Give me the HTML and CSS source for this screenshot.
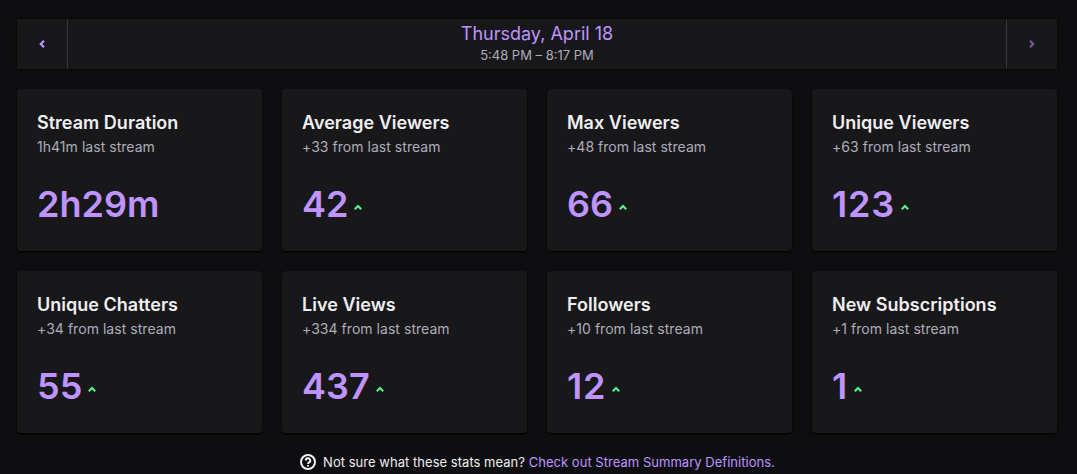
FILE: index.html
```
<!DOCTYPE html>
<html lang="en">
<head>
    <meta charset="UTF-8">
    <meta name="viewport" content="width=device-width, initial-scale=1.0">
    <title>Stream Summary</title>
    <link rel="stylesheet" href="styles.css">
</head>
<body>
    <header class="date-bar">
        <button class="nav-button prev" aria-label="Previous stream">
            <svg width="6" height="8" viewBox="0 0 6 8"><path d="M5 .8 1.800 4 5 7.200"/></svg>
        </button>
        <div class="date-info">
            <div class="date">Thursday, April 18</div>
            <div class="time">5:48 PM – 8:17 PM</div>
        </div>
        <button class="nav-button next" aria-label="Next stream" disabled>
            <svg width="6" height="8" viewBox="0 0 6 8"><path d="M1 .8 4.200 4 1 7.200"/></svg>
        </button>
    </header>

    <main class="stats">
        <div class="card">
            <h2>Stream Duration</h2>
            <p>1h41m last stream</p>
            <div class="value">2h29m</div>
        </div>
        <div class="card">
            <h2>Average Viewers</h2>
            <p>+33 from last stream</p>
            <div class="value">42<svg class="up" width="8" height="6" viewBox="0 0 8 6"><path d="m.8 5.200L4 2l3.200 3.200"/></svg></div>
        </div>
        <div class="card">
            <h2>Max Viewers</h2>
            <p>+48 from last stream</p>
            <div class="value">66<svg class="up" width="8" height="6" viewBox="0 0 8 6"><path d="m.8 5.200L4 2l3.200 3.200"/></svg></div>
        </div>
        <div class="card">
            <h2>Unique Viewers</h2>
            <p>+63 from last stream</p>
            <div class="value spaced">123<svg class="up" width="8" height="6" viewBox="0 0 8 6"><path d="m.8 5.200L4 2l3.200 3.200"/></svg></div>
        </div>
        <div class="card">
            <h2>Unique Chatters</h2>
            <p>+34 from last stream</p>
            <div class="value">55<svg class="up" width="8" height="6" viewBox="0 0 8 6"><path d="m.8 5.200L4 2l3.200 3.200"/></svg></div>
        </div>
        <div class="card">
            <h2>Live Views</h2>
            <p>+334 from last stream</p>
            <div class="value">437<svg class="up" width="8" height="6" viewBox="0 0 8 6"><path d="m.8 5.200L4 2l3.200 3.200"/></svg></div>
        </div>
        <div class="card">
            <h2>Followers</h2>
            <p>+10 from last stream</p>
            <div class="value spaced">12<svg class="up" width="8" height="6" viewBox="0 0 8 6"><path d="m.8 5.200L4 2l3.200 3.200"/></svg></div>
        </div>
        <div class="card">
            <h2>New Subscriptions</h2>
            <p>+1 from last stream</p>
            <div class="value spaced">1<svg class="up" width="8" height="6" viewBox="0 0 8 6"><path d="m.8 5.200L4 2l3.200 3.200"/></svg></div>
        </div>
    </main>

    <footer class="help">
        <svg class="help-icon" width="16" height="16" viewBox="0 0 16 16">
            <circle cx="8" cy="8" r="7"/>
            <path d="M5.800 6.500a2.200 2.200 0 1 1 3.300 1.900C8.300 8.800 8 9.100 8 10M8 11v1.600"/>
        </svg>
        <span>Not sure what these stats mean? <a href="#">Check out Stream Summary Definitions.</a></span>
    </footer>
</body>
</html>
```

FILE: styles.css
```
:root {
    --bg: #0e0e10;
    --card: #18181b;
    --text: #efeff1;
    --muted: #adadb8;
    --purple: #bf94ff;
    --green: #57ee8c;
}

* {
    margin: 0;
    padding: 0;
    box-sizing: border-box;
}

body {
    height: 474px;
    padding: 19px 20px 0 17px;
    overflow: hidden;
    background: var(--bg);
    color: var(--text);
    font-family: Inter, sans-serif;
}

svg {
    fill: none;
    stroke: currentColor;
    stroke-width: 2;
}

.date-bar {
    display: flex;
    height: 50px;
    background: var(--card);
    box-shadow: 0 0 2px #000;
}

.nav-button {
    display: flex;
    align-items: center;
    justify-content: center;
    width: 51px;
    border: none;
    background: none;
    color: var(--purple);
}

.nav-button svg {
    stroke-width: 2.2;
}

.prev {
    border-right: 1px solid #35353a;
}

.next {
    border-left: 1px solid #35353a;
}

.next svg {
    opacity: 0.55;
}

.date-info {
    flex: 1;
    padding-top: 3px;
    text-align: center;
}

.date {
    color: var(--purple);
    font-size: 18px;
    line-height: 24px;
}

.time {
    color: var(--muted);
    font-size: 13px;
    line-height: 18px;
}

.stats {
    display: grid;
    grid-template-columns: repeat(4, 1fr);
    gap: 20px;
    margin-top: 20px;
}

.card {
    height: 162px;
    padding: 22px 20px;
    border-radius: 4px;
    background: var(--card);
    box-shadow: 0 1px 2px #000;
}

.card h2 {
    font-size: 18px;
    font-weight: 600;
    line-height: 24px;
    letter-spacing: 0.02px;
}

.card p {
    color: var(--muted);
    font-size: 14px;
    line-height: 24px;
    letter-spacing: 0.04px;
}

.value {
    display: flex;
    align-items: center;
    margin-top: 23px;
    color: var(--purple);
    font-size: 36px;
    font-weight: 640;
    line-height: 44px;
}

.spaced {
    letter-spacing: 0.8px;
}

.up {
    margin: 5px 0 0 6px;
    color: var(--green);
    stroke-width: 2.2;
}

.help {
    display: flex;
    align-items: center;
    justify-content: center;
    gap: 7px;
    margin-top: 20px;
    padding-left: 1px;
    font-size: 13px;
    line-height: 18px;
    letter-spacing: 0.03px;
}

.help a {
    color: var(--purple);
    text-decoration: none;
}
```
